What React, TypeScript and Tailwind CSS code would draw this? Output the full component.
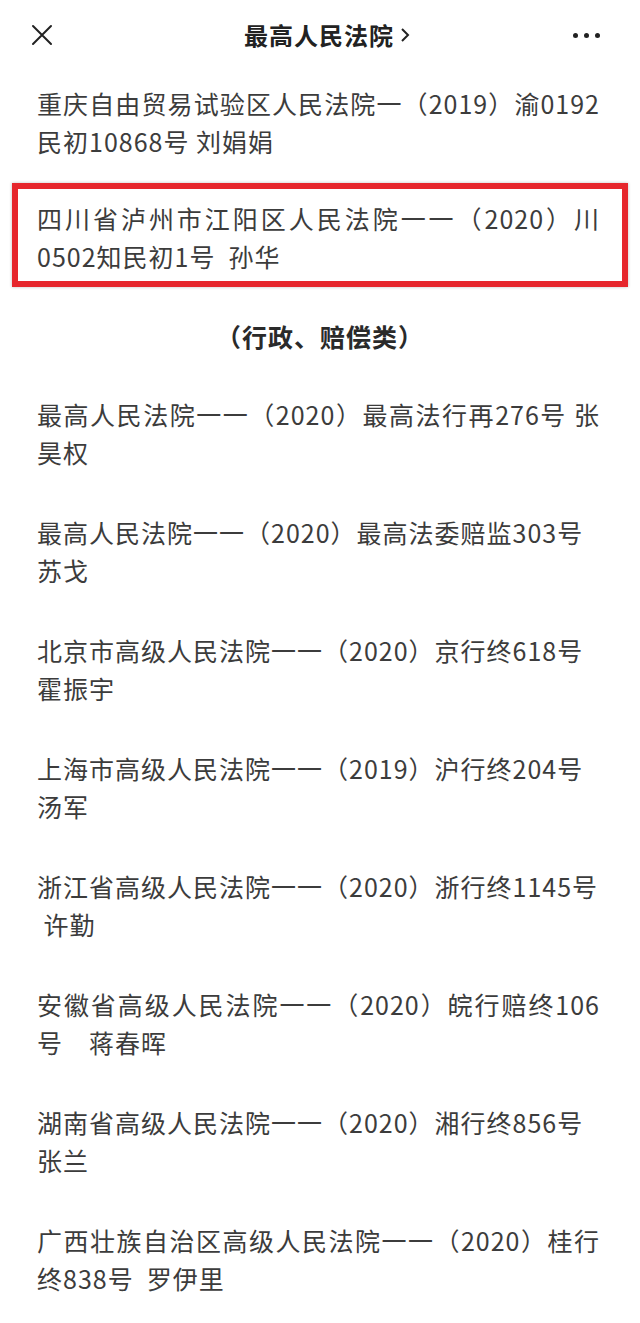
import React from "react";

type Item = { lines: string[]; full?: boolean };

const items: Item[] = [
  { lines: ["最高人民法院一一（2020）最高法行再276号 张", "昊权"], full: true },
  { lines: ["最高人民法院一一（2020）最高法委赔监303号", "苏戈"] },
  { lines: ["北京市高级人民法院一一（2020）京行终618号", "霍振宇"] },
  { lines: ["上海市高级人民法院一一（2019）沪行终204号", "汤军"] },
  { lines: ["浙江省高级人民法院一一（2020）浙行终1145号", " 许勤"] },
  { lines: ["安徽省高级人民法院一一（2020）皖行赔终106", "号　蒋春晖"], full: true },
  { lines: ["湖南省高级人民法院一一（2020）湘行终856号", "张兰"] },
  { lines: ["广西壮族自治区高级人民法院一一（2020）桂行", "终838号  罗伊里"], full: true },
];

const Entry = ({ item }: { item: Item }) => (
  <div className="flex flex-col">
    <div
      className={
        "h-[38px] leading-[38px] whitespace-pre " +
        (item.full ? "[text-align-last:justify]" : "")
      }
    >
      {item.lines[0]}
    </div>
    <div className="h-[38px] leading-[38px] whitespace-pre">{item.lines[1]}</div>
  </div>
);

const App = () => {
  return (
    <div
      className="w-[640px] h-[1323px] bg-white overflow-hidden text-[#3c3c3c]"
      style={{ fontFamily: '"Noto Sans CJK SC", "Noto Sans", sans-serif' }}
    >
      {/* top bar */}
      <div className="h-[70px] flex items-center justify-between pl-[31px] pr-[40px]">
        <svg width="22" height="22" viewBox="0 0 22 22" className="text-[#222]">
          <path d="M2 2 L20 20 M20 2 L2 20" stroke="currentColor" strokeWidth="2" strokeLinecap="round" />
        </svg>
        <div className="flex items-center gap-[6px] text-[24px] font-bold text-[#222] tracking-[1px] pl-[28px]">
          <span>最高人民法院</span>
          <svg width="10" height="16" viewBox="0 0 10 16">
            <path d="M2 2 L8 8 L2 14" stroke="#222" strokeWidth="2" fill="none" />
          </svg>
        </div>
        <div className="flex items-center gap-[6px]">
          <span className="w-[5px] h-[5px] rounded-full bg-[#222]" />
          <span className="w-[5px] h-[5px] rounded-full bg-[#222]" />
          <span className="w-[5px] h-[5px] rounded-full bg-[#222]" />
        </div>
      </div>

      <div className="text-[25px] tracking-[1px] flex flex-col">
        <div className="pl-[37px] w-[600px] mt-[14px]">
          <Entry item={{ lines: ["重庆自由贸易试验区人民法院一（2019）渝0192", "民初10868号 刘娟娟"], full: true }} />
        </div>

        <div className="mx-[12px] mt-[23px] border-[6px] border-[#e6262c] pl-[19px] pr-[22px] pt-[10px] pb-[6px] shadow-[0_0_3px_rgba(0,0,0,0.25)]">
          <div className="h-[38px] leading-[38px] whitespace-pre [text-align-last:justify] tracking-[1px]">
            四川省泸州市江阳区人民法院一一（2020）川
          </div>
          <div className="h-[38px] leading-[38px] whitespace-pre">0502知民初1号  孙华</div>
        </div>

        <div className="mt-[30px] h-[38px] leading-[38px] text-center font-bold text-[#2a2a2a]">
          （行政、赔偿类）
        </div>

        <div className="pl-[37px] w-[600px] mt-[40px] flex flex-col gap-[42px]">
          {items.map((it, i) => (
            <Entry key={i} item={it} />
          ))}
        </div>
      </div>
    </div>
  );
};

export default App;
